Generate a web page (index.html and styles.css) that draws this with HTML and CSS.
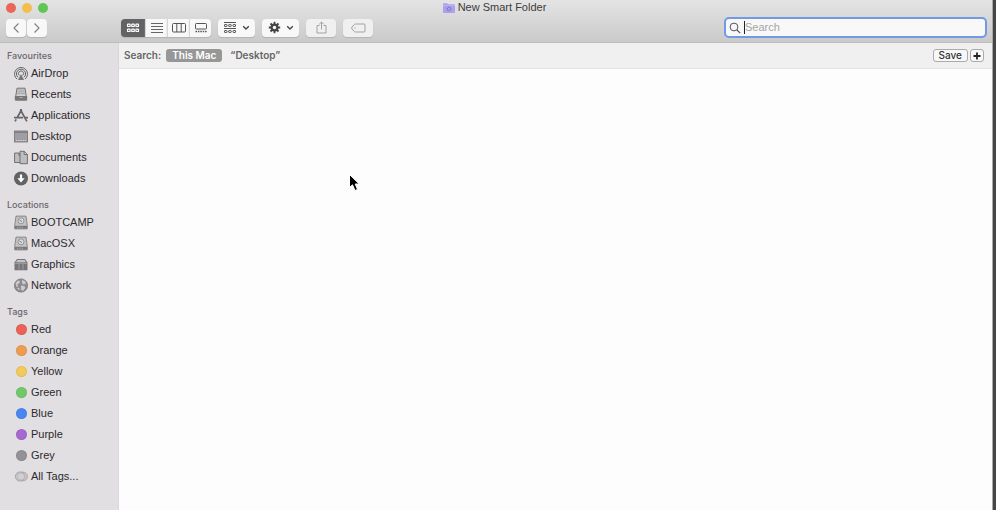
FILE: index.html
```html
<!DOCTYPE html>
<html lang="en-GB">
<head>
<meta charset="utf-8">
<title>New Smart Folder</title>
<link rel="stylesheet" href="styles.css">
</head>
<body>
<div class="window">
  <header class="header">
    <div class="titlebar">
      <div class="lights">
        <button class="light close" aria-label="Close"></button>
        <button class="light minimise" aria-label="Minimise"></button>
        <button class="light zoom" aria-label="Zoom"></button>
      </div>
      <h1 class="title">
        <svg width="12" height="10" viewBox="0 0 12 10"><path d="M0 1.2Q0 .3 1 .3H4L5 1.2H11Q12 1.2 12 2V9Q12 10 11 10H1Q0 10 0 9Z" fill="#aaa0ec"/><path d="M0 2.6H12" stroke="#c4bdf5" stroke-width=".7"/><circle cx="6" cy="5.8" r="1.8" fill="none" stroke="#7c70c8" stroke-width="1.2" stroke-dasharray="1.1 .5"/></svg>
        New Smart Folder
      </h1>
    </div>
    <div class="toolbar">
      <div class="nav">
        <button class="tool" aria-label="Back"><svg width="8" height="12" viewBox="0 0 8 12"><path d="M6.500 1.500 2 6l4.500 4.500" fill="none" stroke="#7d7d7d" stroke-width="1.100"/></svg></button>
        <button class="tool" aria-label="Forward"><svg width="8" height="12" viewBox="0 0 8 12"><path d="M1.500 1.500 6 6l-4.500 4.500" fill="none" stroke="#7d7d7d" stroke-width="1.100"/></svg></button>
      </div>
      <div class="views">
        <button class="tool selected" aria-label="Icons"><svg width="14" height="10" viewBox="0 0 14 10" fill="none" stroke="#fff" stroke-width="1.200"><rect x="1.500" y="1.200" width="2.600" height="2.300" rx=".6"/><rect x="5.700" y="1.200" width="2.600" height="2.300" rx=".6"/><rect x="9.900" y="1.200" width="2.600" height="2.300" rx=".6"/><rect x="1.500" y="6.200" width="2.600" height="2.300" rx=".6"/><rect x="5.700" y="6.200" width="2.600" height="2.300" rx=".6"/><rect x="9.900" y="6.200" width="2.600" height="2.300" rx=".6"/></svg></button>
        <button class="tool" aria-label="List"><svg width="12" height="10" viewBox="0 0 12 10"><path d="M0 .5H12M0 3.500H12M0 6.500H12M0 9.500H12" stroke="#666" stroke-width="1"/></svg></button>
        <button class="tool" aria-label="Columns"><svg width="14" height="10" viewBox="0 0 14 10"><path d="M1.500.5H12.500Q13.500.5 13.500 1.500V8Q13.500 9 12.500 9H1.500Q.5 9 .5 8V1.500Q.5.5 1.500.5ZM4.800.5V9M9.200.5V9" fill="none" stroke="#555"/></svg></button>
        <button class="tool" aria-label="Gallery"><svg width="12" height="10" viewBox="0 0 12 10"><rect x=".5" y=".5" width="11" height="5.500" rx=".8" fill="none" stroke="#555"/><path d="M.5 8.500H12" stroke="#555" stroke-width="1.500" stroke-dasharray="1.500 .9"/></svg></button>
      </div>
      <button class="tool menu" aria-label="Group by">
        <svg width="14" height="12" viewBox="0 0 14 12" fill="none" stroke="#555" stroke-width="1"><path d="M1 .5H13M1 6.500H13"/><rect x="1.500" y="2.500" width="2.500" height="2" rx=".5"/><rect x="5.700" y="2.500" width="2.500" height="2" rx=".5"/><rect x="10" y="2.500" width="2.500" height="2" rx=".5"/><rect x="1.500" y="8.500" width="2.500" height="2" rx=".5"/><rect x="5.700" y="8.500" width="2.500" height="2" rx=".5"/><rect x="10" y="8.500" width="2.500" height="2" rx=".5"/></svg>
        <svg width="8" height="6" viewBox="0 0 8 6"><path d="M1.200 1.200 4 4 6.800 1.200" fill="none" stroke="#444" stroke-width="1.300"/></svg>
      </button>
      <button class="tool menu" aria-label="Actions">
        <svg width="13" height="13" viewBox="0 0 13 13" fill="none" stroke="#444"><circle cx="6.500" cy="6.500" r="2.900" stroke-width="2.200"/><path d="M6.500 .8V3M6.500 10v2.200M.8 6.500H3M10 6.500h2.200M2.500 2.500 4 4M9 9l1.500 1.500M2.500 10.500 4 9M9 4l1.500-1.500" stroke-width="1.800"/></svg>
        <svg width="8" height="6" viewBox="0 0 8 6"><path d="M1.200 1.200 4 4 6.800 1.200" fill="none" stroke="#444" stroke-width="1.300"/></svg>
      </button>
      <button class="tool wide" aria-label="Share" disabled><svg width="11" height="13" viewBox="0 0 11 13"><path d="M3.500 4.500H1V12H10V4.500H7.500M5.500 8.500V1.200M3.200 3.300 5.500 1 7.800 3.300" fill="none" stroke="#a2a2a2" stroke-width="1"/></svg></button>
      <button class="tool wide" aria-label="Edit tags" disabled><svg width="15" height="10" viewBox="0 0 15 10"><path d="M4.500 1H13Q14 1 14 2V8Q14 9 13 9H4.500Q3.800 9 3.200 8.400L1 6Q.3 5 1 4L3.200 1.600Q3.800 1 4.500 1Z" fill="none" stroke="#a2a2a2" stroke-width="1"/><circle cx="4" cy="5" r=".7" fill="#aaa"/></svg></button>
      <label class="search">
        <svg width="12" height="12" viewBox="0 0 12 12"><circle cx="5" cy="5" r="3.900" fill="none" stroke="#555"/><path d="m8 8 3.200 3.200" stroke="#555" stroke-width="1.200"/></svg>
        <span class="caret"></span>
        <input type="text" placeholder="Search" aria-label="Search">
      </label>
    </div>
  </header>
  <div class="body">
    <nav class="sidebar">
      <h2>Favourites</h2>
      <ul>
        <li><a href="#"><svg viewBox="0 0 14 14" fill="none" stroke="#666" stroke-width="1"><path d="M3 12.600A6.500 6.500 0 1 1 11 12.600M4 10.800A4.600 4.600 0 1 1 10 10.800M5.300 9A2.600 2.600 0 1 1 8.700 9"/><path d="m7 7.500 3 6H4Z" fill="#777" stroke="none"/></svg>AirDrop</a></li>
        <li><a href="#"><svg viewBox="0 0 14 14"><path d="M3 .7H11L12.300 9H1.700Z" fill="#d2cfd3" stroke="#666" stroke-width=".9"/><path d="M3.500 2.500h7M3.200 4.300h7.600M3 6.100h8" stroke="#999" stroke-width=".8"/><path d="M.8 8.500H4.500L5.300 10H8.700L9.500 8.500H13.200V12.200Q13.200 13.200 12.200 13.200H1.800Q.8 13.200.8 12.200Z" fill="#777"/></svg>Recents</a></li>
        <li><a href="#"><svg viewBox="0 0 14 14" fill="none" stroke="#666" stroke-width="1.700"><path d="M7.700 1 3 9.500M6.300 1 12 11.300M0 9.200H9M11 9.200H14M2.200 10.800 1 12.900M11.700 10.800l1.200 2.100"/></svg>Applications</a></li>
        <li><a href="#"><svg viewBox="0 0 14 14"><rect x=".5" y="1.500" width="13" height="11" fill="#a09ea2" stroke="#737174" stroke-width=".8"/><path d="M1 2.700H13" stroke="#666" stroke-width=".8"/><path d="M2 11H12" stroke="#ddd" stroke-width="1" stroke-dasharray="1 .8"/></svg>Desktop</a></li>
        <li><a href="#"><svg viewBox="0 0 14 14" fill="#c0bdc1" stroke="#666" stroke-width=".9"><path d="M.6 2.500H5L7.500 5V12H.6ZM5 2.500V5H7.500"/><path d="M6 .8H10.200L13.400 4V13.200H6ZM10.200.8V4H13.400"/></svg>Documents</a></li>
        <li><a href="#"><svg viewBox="0 0 14 14"><circle cx="7" cy="7" r="7" fill="#626164"/><path d="M7 3V8" stroke="#fff" stroke-width="2.200"/><path d="M3.300 6.800H10.700L7 11Z" fill="#fff"/></svg>Downloads</a></li>
      </ul>
      <h2>Locations</h2>
      <ul>
        <li><a href="#"><svg viewBox="0 0 14 14"><path d="M2 .6H12L13.300 10V13.400H.7V10Z" fill="#c3c1c4" stroke="#777" stroke-width=".8"/><circle cx="7" cy="5.300" r="3" fill="#dad8db" stroke="#888" stroke-width=".8"/><path d="m5.500 4.500 2.300 1.500" stroke="#777"/><path d="M1 10.300H13V13H1Z" fill="#777"/><path d="M3 11.700h6" stroke="#bbb" stroke-width=".8" stroke-dasharray="1 .7"/></svg>BOOTCAMP</a></li>
        <li><a href="#"><svg viewBox="0 0 14 14"><path d="M2 .6H12L13.300 10V13.400H.7V10Z" fill="#c3c1c4" stroke="#777" stroke-width=".8"/><circle cx="7" cy="5.300" r="3" fill="#dad8db" stroke="#888" stroke-width=".8"/><path d="m5.500 4.500 2.300 1.500" stroke="#777"/><path d="M1 10.300H13V13H1Z" fill="#777"/><path d="M3 11.700h6" stroke="#bbb" stroke-width=".8" stroke-dasharray="1 .7"/></svg>MacOSX</a></li>
        <li><a href="#"><svg viewBox="0 0 14 14"><path d="M3 1.500H11L13.500 5V12.800H.5V5Z" fill="#77757a"/><path d="M3.400 2.400H10.600L12 4.800H2Z" fill="#c6c4c8"/><path d="M1 5.800H13M5 6V12M9 6V12" stroke="#b5b3b7" stroke-width=".7"/></svg>Graphics</a></li>
        <li><a href="#"><svg viewBox="0 0 14 14"><circle cx="7" cy="7" r="6.600" fill="#8d8b8f" stroke="#777" stroke-width=".8"/><path d="M1.500 4.500 4 2l2 .5-.5 2L3.500 6 4 8 2.500 8.500ZM8 1.500l3 1.300L12 5 9.500 6 8 4.500ZM7 7l3 .5 1.500 1.500L9 12.500 7 11ZM3 10l2-1 1 3Z" fill="#cbc9cd"/></svg>Network</a></li>
      </ul>
      <h2>Tags</h2>
      <ul>
        <li><a href="#"><span class="dot red"></span>Red</a></li>
        <li><a href="#"><span class="dot orange"></span>Orange</a></li>
        <li><a href="#"><span class="dot yellow"></span>Yellow</a></li>
        <li><a href="#"><span class="dot green"></span>Green</a></li>
        <li><a href="#"><span class="dot blue"></span>Blue</a></li>
        <li><a href="#"><span class="dot purple"></span>Purple</a></li>
        <li><a href="#"><span class="dot grey"></span>Grey</a></li>
        <li><a href="#"><svg viewBox="0 0 14 14" fill="#c9c7ca" stroke="#9b999c" stroke-width=".8"><circle cx="9" cy="7" r="4.400"/><circle cx="6" cy="7" r="4.600"/><circle cx="7" cy="7" r="3.600" fill="#d2d0d3" stroke="#b5b3b6"/></svg>All Tags...</a></li>
      </ul>
    </nav>
    <main class="content">
      <div class="scopebar">
        <span class="scope-label">Search:</span>
        <button class="scope active">This Mac</button>
        <button class="scope">“Desktop”</button>
        <button class="small save">Save</button>
        <button class="small plus" aria-label="Add rule"><svg width="8" height="8" viewBox="0 0 8 8"><path d="M4 .5V7.500M.5 4H7.500" stroke="#222" stroke-width="1.800"/></svg></button>
      </div>
      <div class="results"></div>
    </main>
  </div>
</div>
<svg class="pointer" width="14" height="20" viewBox="0 0 14 20"><path d="M1.500 1.500V14.500L4.500 11.800 7 17.500 9.500 16.400 7.200 11H11.300Z" fill="#000" stroke="#fff" stroke-width="1"/></svg>
</body>
</html>
```

FILE: styles.css
```css
* { box-sizing: border-box; }

body {
  margin: 0;
  background: #454545;
  color: #2b2a2c;
  font: 11px/15px "Liberation Sans", Arial, sans-serif;
}

button, input { font: inherit; color: inherit; }
svg { display: block; flex: none; }

.window {
  display: flex;
  flex-direction: column;
  min-height: 100vh;
  margin-right: 3px;
  border-right: 1px solid #a8a8a8;
  background: #fdfdfd;
}

.header {
  height: 43px;
  background: linear-gradient(#e4e4e4, #cacaca);
  border-bottom: 1px solid #bdbdbd;
}

.titlebar {
  display: grid;
  grid-template-columns: 1fr auto 1fr;
  align-items: center;
  height: 15px;
}

.lights { display: flex; gap: 6px; padding-left: 6px; }
.light { width: 10px; height: 10px; padding: 0; border: 0; border-radius: 50%; }
.close { background: #ec6559; }
.minimise { background: #f4be4f; }
.zoom { background: #5fc554; }

.title {
  display: flex;
  align-items: center;
  gap: 3px;
  margin: 0;
  padding-right: 3px;
  font-size: 11px;
  font-weight: 400;
  color: #3c3c3c;
}

.toolbar {
  display: flex;
  align-items: center;
  height: 25px;
  gap: 7px;
  padding: 0 5px 0 6px;
}

.nav { display: flex; gap: 1px; margin-right: 67px; }
.views { display: flex; }

.tool {
  display: flex;
  align-items: center;
  justify-content: center;
  width: 20px;
  height: 18px;
  padding: 0;
  border: 0;
  border-radius: 4px;
  background: #f8f8f8;
  box-shadow: 0 1px 1px #b4b4b4;
}

.views .tool { width: 22px; border-left: 1px solid #d6d6d6; border-radius: 0; }
.views .tool:first-child { width: 24px; border-left: 0; border-radius: 4px 0 0 4px; }
.views .tool:last-child { border-radius: 0 4px 4px 0; }
.views .selected { background: #636265; }
.menu { width: 37px; gap: 5px; }
.wide { width: 30px; }
.wide:disabled { background: #f0f0f0; }

.search {
  display: flex;
  align-items: center;
  width: 263px;
  height: 21px;
  margin-left: auto;
  padding-left: 3px;
  border: 2px solid #7299e4;
  border-radius: 5px;
  background: #f8f8f8;
}

.search input {
  flex: 1;
  min-width: 0;
  padding: 0;
  border: 0;
  outline: 0;
  background: none;
}

.search input::placeholder { color: #a5a5a5; opacity: 1; }
.caret { width: 1px; height: 13px; margin-left: 3px; background: #222; }

.body { display: flex; flex: 1; }

.sidebar {
  flex: none;
  width: 119px;
  padding-top: 5px;
  background: #e2dfe3;
  border-right: 1px solid #dad7db;
}

.sidebar h2 {
  margin: 0;
  padding-left: 7px;
  font-family: Inter, "Liberation Sans", sans-serif;
  font-size: 9px;
  line-height: 15px;
  font-weight: 500;
  color: #69676b;
}

.sidebar ul { margin: 0 0 8px; padding: 0; list-style: none; }

.sidebar a {
  display: flex;
  align-items: center;
  gap: 3px;
  height: 21px;
  padding-left: 14px;
  color: inherit;
  text-decoration: none;
}

.sidebar svg { width: 14px; height: 15px; }

.dot { width: 11px; height: 11px; margin: 0 1px 0 2px; border: 1px solid #0001; border-radius: 50%; }
.red { background: #ec6257; }
.orange { background: #ee9d50; }
.yellow { background: #f2ca5c; }
.green { background: #71c869; }
.blue { background: #4a86f1; }
.purple { background: #a669d0; }
.grey { background: #949296; }

.content { display: flex; flex: 1; flex-direction: column; }

.scopebar {
  display: flex;
  align-items: center;
  height: 26px;
  padding: 0 8px 0 5px;
  background: #f0f0f0;
  border-bottom: 1px solid #e2e2e2;
  color: #666;
  font-family: Inter, "Liberation Sans", sans-serif;
  font-size: 10px;
  font-weight: 600;
}

.scope {
  height: 13px;
  padding: 0 6px;
  border: 0;
  border-radius: 3px;
  background: none;
  line-height: 13px;
}

.scope-label { margin-right: 5px; }
.active { margin-right: 2px; background: #979797; color: #fff; }

.small {
  display: flex;
  align-items: center;
  justify-content: center;
  height: 13px;
  padding: 0 5px;
  border: 1px solid #ababab;
  border-radius: 3px;
  background: #f7f7f7;
  color: #333;
  font-weight: 500;
  line-height: 11px;
}

.save { margin-left: auto; }
.plus { width: 14px; margin-left: 2px; padding: 0; }
.results { flex: 1; }

.pointer { position: absolute; left: 348px; top: 173px; }
```
